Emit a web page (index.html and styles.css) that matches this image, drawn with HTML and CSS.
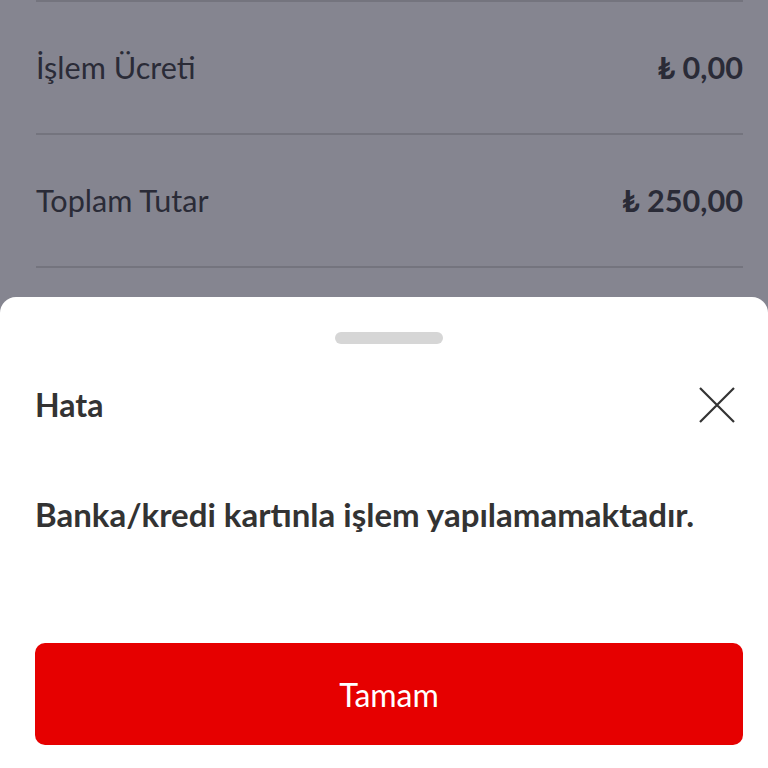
FILE: index.html
```html
<!DOCTYPE html>
<html lang="tr">
<head>
<meta charset="utf-8">
<link rel="stylesheet" href="styles.css">
</head>
<body>
<div class="screen">
  <div class="list">
    <div class="row"><span class="label">İşlem Ücreti</span><span class="value">₺ 0,00</span></div>
    <div class="row"><span class="label">Toplam Tutar</span><span class="value">₺ 250,00</span></div>
  </div>
  <div class="sheet">
    <div class="handle"></div>
    <div class="head">
      <span class="title">Hata</span>
      <svg class="close" width="38" height="38" viewBox="0 0 38 38"><path d="M2 2 L36 36 M36 2 L2 36" stroke="#333" stroke-width="2.2" fill="none"/></svg>
    </div>
    <p class="msg">Banka/kredi kartınla işlem yapılamamaktadır.</p>
    <button class="btn">Tamam</button>
  </div>
</div>
</body>
</html>
```
FILE: styles.css
```css
html, body { margin: 0; padding: 0; }
body { width: 768px; height: 768px; overflow: hidden; background: #858590; font-family: Lato, "Open Sans", sans-serif; }
.screen { position: relative; width: 768px; height: 768px; background: #858590; }
.list { padding: 0 25px 0 36px; }
.row { height: 131px; border-top: 2px solid #74747e; display: flex; justify-content: space-between; align-items: center; color: #2a2b37; font-size: 30.6px; }
.row:last-child { border-bottom: 2px solid #74747e; }
.label { font-weight: 400; }
.value { font-weight: 700; }
.sheet { position: absolute; left: 0; right: 0; top: 297px; bottom: 0; background: #fff; border-radius: 16px 16px 0 0; padding: 0 25px 0 35px; }
.handle { width: 108px; height: 12px; border-radius: 6px; background: #d6d6d6; margin: 35px auto 0; }
.head { display: flex; justify-content: space-between; align-items: center; margin-top: 41px; }
.title { font-size: 32px; font-weight: 700; color: #333; }
.close { margin-right: 7px; }
.msg { margin: 70px 0 0; font-size: 33px; font-weight: 700; color: #333; line-height: 40px; }
.btn { display: block; width: 100%; height: 102px; margin-top: 109px; background: #e60000; border: 0; border-radius: 10px; color: #fff; font-family: inherit; font-size: 32px; }
```
